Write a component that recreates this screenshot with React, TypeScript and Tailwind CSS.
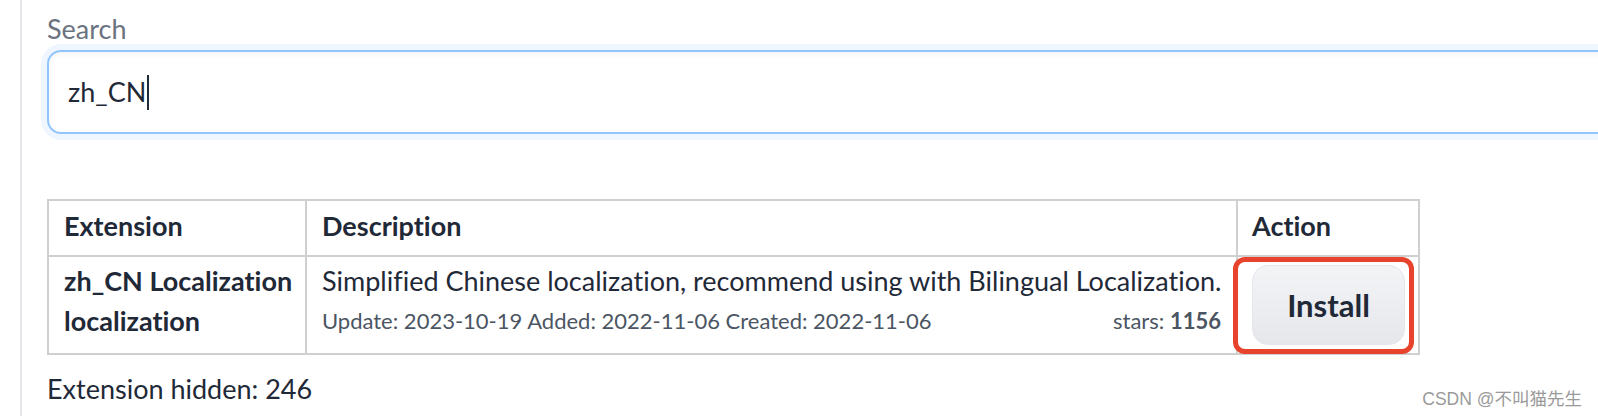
export default function App() {
  return (
    <div className="relative h-[416px] w-[1598px] overflow-hidden bg-white pl-[20px] text-[#1f2937] [font-family:Lato,'Noto_Sans',sans-serif] [font-variant-ligatures:none]">
      <div className="h-full border-l-2 border-[#e5e7eb] pl-[25px] pt-[11px]">
        <div className="text-[27px] leading-[36px] text-[#6b7280]">Search</div>
        <div className="mt-[3px] flex h-[84px] w-[1600px] items-center rounded-[14px] border-2 border-[#93c5fd] bg-white pl-[19px] shadow-[0_0_0_6px_#eff6ff,inset_0_3px_6px_rgba(0,0,0,0.04)]">
          <span className="text-[27px] leading-[40px]">zh_CN</span>
          <span className="ml-[1px] inline-block h-[35px] w-[2px] bg-[#1f2937]" />
        </div>

        <table className="mt-[65px] w-[1371px] table-fixed border-collapse text-[27px] leading-[40px]">
          <colgroup>
            <col className="w-[258px]" />
            <col className="w-[931px]" />
            <col className="w-[182px]" />
          </colgroup>
          <thead>
            <tr>
              <th className="border-2 border-[#cfcfcf] px-[15px] pb-[9px] pt-[5px] text-left font-bold">Extension</th>
              <th className="border-2 border-[#cfcfcf] px-[15px] pb-[9px] pt-[5px] text-left font-bold">Description</th>
              <th className="border-2 border-[#cfcfcf] px-[14px] pb-[9px] pt-[5px] text-left font-bold">Action</th>
            </tr>
          </thead>
          <tbody>
            <tr>
              <td className="border-2 border-[#cfcfcf] px-[15px] pb-[8px] pt-[4px] align-top font-bold">
                <div className="whitespace-nowrap">zh_CN Localization</div>
                <div>localization</div>
              </td>
              <td className="border-2 border-[#cfcfcf] px-[15px] pb-[8px] pt-[4px] align-top">
                <div className="whitespace-nowrap">Simplified Chinese localization, recommend using with Bilingual Localization.</div>
                <div className="flex justify-between text-[22px] text-[#4b5563]">
                  <span>Update: 2023-10-19 Added: 2022-11-06 Created: 2022-11-06</span>
                  <span>
                    stars: <b className="font-bold">1156</b>
                  </span>
                </div>
              </td>
              <td className="relative border-2 border-[#cfcfcf] py-[8px] pl-[14px] pr-[13px] align-middle">
                <button className="flex h-[80px] w-full items-center justify-center rounded-[16px] border border-[#e5e7eb] bg-gradient-to-b from-[#f3f4f6] to-[#e5e7eb] text-[31px] font-bold text-[#1f2937]">
                  Install
                </button>
                <div className="pointer-events-none absolute left-[-5px] top-[0px] h-[97px] w-[181px] rounded-[12px] border-[5px] border-[#e8432d]" />
              </td>
            </tr>
          </tbody>
        </table>

        <div className="mt-[16px] text-[27px] leading-[36px]">Extension hidden: 246</div>
      </div>

      <div className="absolute bottom-[6px] right-[16px] text-[17.5px] leading-[22px] text-[#9a9a9a] [font-family:'Liberation_Sans','Noto_Sans_CJK_SC',sans-serif] [text-shadow:0_0_1px_#fff]">
        CSDN @不叫猫先生
      </div>
    </div>
  );
}
